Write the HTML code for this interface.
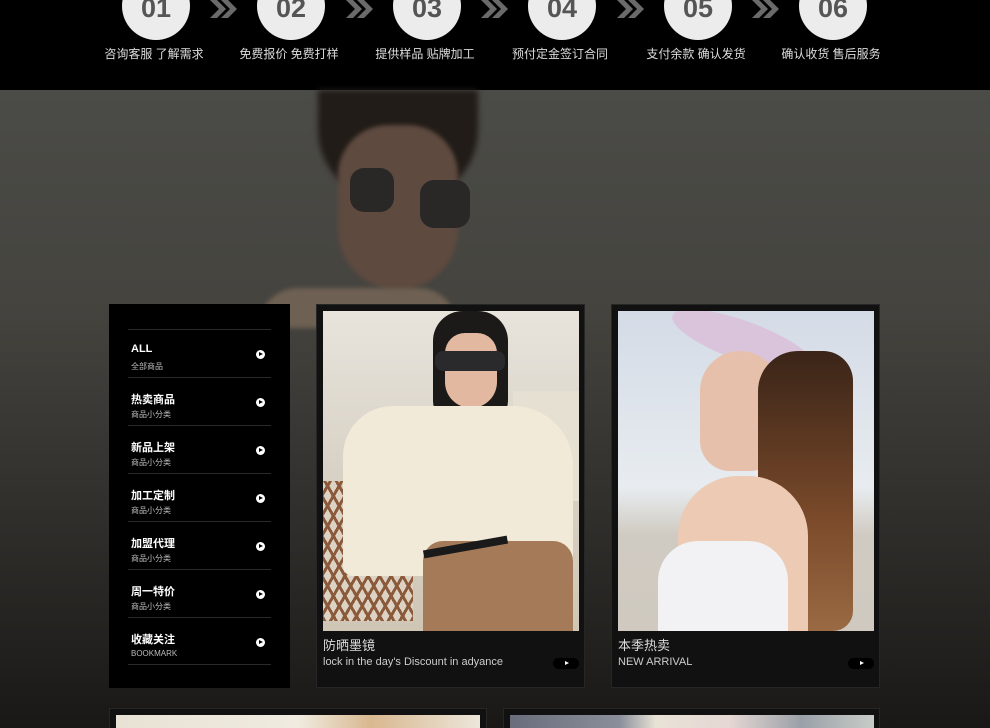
<!DOCTYPE html>
<html><head><meta charset="utf-8"><style>
*{margin:0;padding:0;box-sizing:border-box}
html{background:#1a1816;width:990px;height:728px;overflow:hidden}
body{width:990px;height:728px;overflow:hidden;position:relative;font-family:"Liberation Sans","Noto Sans CJK SC",sans-serif;background:linear-gradient(180deg,#4b4b47 90px,#45443f 300px,#2e2c29 540px,#1a1816 728px);}
.top{position:absolute;left:0;top:0;width:990px;height:90px;background:#000}
.c{position:absolute;top:-28px;width:68px;height:68px;border-radius:50%;background:#ececec;color:#555;font-weight:bold;font-size:27px;text-align:center;line-height:72px}
.lbl{position:absolute;top:45px;width:160px;text-align:center;color:#ddd;font-size:12px}
.chev{position:absolute;top:-2px}
.abs{position:absolute}
.menu{position:absolute;left:109px;top:304px;width:181px;height:384px;background:#000}
.item{position:absolute;left:19px;width:143px;height:48px;border-top:1px solid #2a2a2a}
.item b{position:absolute;left:3px;top:13px;color:#fff;font-size:11px}
.item i{position:absolute;left:3px;top:31px;color:#bbb;font-size:8px;font-style:normal}
.item s{position:absolute;left:128px;top:20px;width:9px;height:9px;border-radius:50%;background:#fff}
.item s:after{content:"";position:absolute;left:3px;top:2px;border-left:4px solid #000;border-top:2.5px solid transparent;border-bottom:2.5px solid transparent}
.card{position:absolute;background:#111;border:1px solid #262626}
.t1{position:absolute;color:#ddd;font-size:13px}
.t2{position:absolute;color:#ccc;font-size:11px}
.pill{position:absolute;width:26px;height:11px;border-radius:6px;background:#000}
.pill:after{content:"";position:absolute;left:12px;top:3px;border-left:4px solid #fff;border-top:2.5px solid transparent;border-bottom:2.5px solid transparent}
</style></head><body>
<div class="top">
<div class="c" style="left:122px">01</div><div class="lbl" style="left:74px">咨询客服 了解需求</div>
<div class="c" style="left:257px">02</div><div class="lbl" style="left:209px">免费报价 免费打样</div>
<div class="c" style="left:393px">03</div><div class="lbl" style="left:345px">提供样品 贴牌加工</div>
<div class="c" style="left:528px">04</div><div class="lbl" style="left:480px">预付定金签订合同</div>
<div class="c" style="left:664px">05</div><div class="lbl" style="left:616px">支付余款 确认发货</div>
<div class="c" style="left:799px">06</div><div class="lbl" style="left:751px">确认收货 售后服务</div>
<svg class="chev" style="left:208px" width="32" height="22"><path d="M2 2h7l9 9-9 9H2l9-9z M13 2h7l9 9-9 9h-7l9-9z" fill="#6a6a6a"/></svg>
<svg class="chev" style="left:344px" width="32" height="22"><path d="M2 2h7l9 9-9 9H2l9-9z M13 2h7l9 9-9 9h-7l9-9z" fill="#6a6a6a"/></svg>
<svg class="chev" style="left:479px" width="32" height="22"><path d="M2 2h7l9 9-9 9H2l9-9z M13 2h7l9 9-9 9h-7l9-9z" fill="#6a6a6a"/></svg>
<svg class="chev" style="left:615px" width="32" height="22"><path d="M2 2h7l9 9-9 9H2l9-9z M13 2h7l9 9-9 9h-7l9-9z" fill="#6a6a6a"/></svg>
<svg class="chev" style="left:750px" width="32" height="22"><path d="M2 2h7l9 9-9 9H2l9-9z M13 2h7l9 9-9 9h-7l9-9z" fill="#6a6a6a"/></svg>
</div>
<!-- background woman -->
<div class="abs" style="left:318px;top:90px;width:160px;height:110px;border-radius:0 0 70px 70px;background:#221c18;filter:blur(3px)"></div>
<div class="abs" style="left:338px;top:125px;width:120px;height:165px;border-radius:50px 50px 60px 60px;background:#5e4a3f;filter:blur(2px)"></div>
<div class="abs" style="left:350px;top:168px;width:44px;height:44px;border-radius:14px;background:#2a2826"></div>
<div class="abs" style="left:420px;top:180px;width:50px;height:48px;border-radius:14px;background:#2a2826"></div>
<div class="abs" style="left:258px;top:288px;width:200px;height:40px;border-radius:40px 40px 0 0;background:#6e6052;filter:blur(2px)"></div>
<div class="menu">
<div class="item" style="top:25px"><b>ALL</b><i>全部商品</i><s></s></div>
<div class="item" style="top:73px"><b>热卖商品</b><i>商品小分类</i><s></s></div>
<div class="item" style="top:121px"><b>新品上架</b><i>商品小分类</i><s></s></div>
<div class="item" style="top:169px"><b>加工定制</b><i>商品小分类</i><s></s></div>
<div class="item" style="top:217px"><b>加盟代理</b><i>商品小分类</i><s></s></div>
<div class="item" style="top:265px"><b>周一特价</b><i>商品小分类</i><s></s></div>
<div class="item" style="top:313px;border-bottom:1px solid #2a2a2a"><b>收藏关注</b><i>BOOKMARK</i><s></s></div>
</div>
<div class="card" style="left:316px;top:304px;width:269px;height:384px">
<div class="abs" style="left:6px;top:6px;width:256px;height:320px;overflow:hidden;background:linear-gradient(180deg,#e8e4dc 0,#d8d2c6 50%,#cfc6b6 100%)">
 <div class="abs" style="left:190px;top:80px;width:66px;height:110px;background:#e6e0d2"></div>
 <div class="abs" style="left:0;top:170px;width:90px;height:140px;background:repeating-linear-gradient(60deg,#8a5a3a 0 3px,transparent 3px 10px),repeating-linear-gradient(-60deg,#8a5a3a 0 3px,#ddd3c4 3px 10px)"></div>
 <div class="abs" style="left:110px;top:0;width:75px;height:110px;border-radius:30px 30px 20px 20px;background:#1c1a18"></div>
 <div class="abs" style="left:122px;top:22px;width:52px;height:75px;border-radius:20px 20px 26px 26px;background:#e2b8a0"></div>
 <div class="abs" style="left:112px;top:40px;width:70px;height:20px;border-radius:8px;background:#2a2a2c"></div>
 <div class="abs" style="left:20px;top:95px;width:230px;height:170px;border-radius:50px 60px 10px 10px;background:#f2ead8"></div>
 <div class="abs" style="left:100px;top:230px;width:150px;height:90px;border-radius:20px 20px 0 0;background:#a57a58"></div>
 <div class="abs" style="left:100px;top:232px;width:85px;height:8px;background:#1a1a1a;transform:rotate(-10deg)"></div>
</div>
<div class="t1" style="left:6px;top:330px">防晒墨镜</div>
<div class="t2" style="left:6px;top:351px">lock in the day's Discount in adyance</div>
<div class="pill" style="left:236px;top:353px"></div>
</div>
<div class="card" style="left:611px;top:304px;width:269px;height:384px">
<div class="abs" style="left:6px;top:6px;width:256px;height:320px;overflow:hidden;background:linear-gradient(180deg,#d4dbe6 0,#e8ecf0 55%,#d0cbc2 70%,#cfc9c0 100%)">
 <div class="abs" style="left:50px;top:10px;width:150px;height:40px;border-radius:50%;background:#d9c4dc;transform:rotate(20deg)"></div>
 <div class="abs" style="left:82px;top:40px;width:80px;height:120px;border-radius:40px 40px 30px 30px;background:#e6c0aa"></div>
 <div class="abs" style="left:140px;top:40px;width:95px;height:280px;border-radius:40px 30px 20px 10px;background:linear-gradient(180deg,#3a2418,#7a4a2a 60%,#9a6a44)"></div>
 <div class="abs" style="left:60px;top:165px;width:130px;height:160px;border-radius:60px 60px 0 0;background:#eccab4"></div>
 <div class="abs" style="left:40px;top:230px;width:130px;height:90px;border-radius:40px 40px 0 0;background:#f2f2f4"></div>
</div>
<div class="t1" style="left:6px;top:330px">本季热卖</div>
<div class="t2" style="left:6px;top:351px">NEW ARRIVAL</div>
<div class="pill" style="left:236px;top:353px"></div>
</div>
<div class="card" style="left:109px;top:708px;width:378px;height:40px"><div class="abs" style="left:6px;top:6px;width:364px;height:30px;background:linear-gradient(90deg,#e8e2d4,#f0ebe0 50%,#d8b890 70%,#ece6da)"></div></div>
<div class="card" style="left:503px;top:708px;width:377px;height:40px"><div class="abs" style="left:6px;top:6px;width:364px;height:30px;background:linear-gradient(90deg,#6a6e7c,#8a8e9a 30%,#e8e2d6 40%,#e6d8d4 60%,#9aa0a8 80%,#c8ccc8)"></div></div>
</body></html>
